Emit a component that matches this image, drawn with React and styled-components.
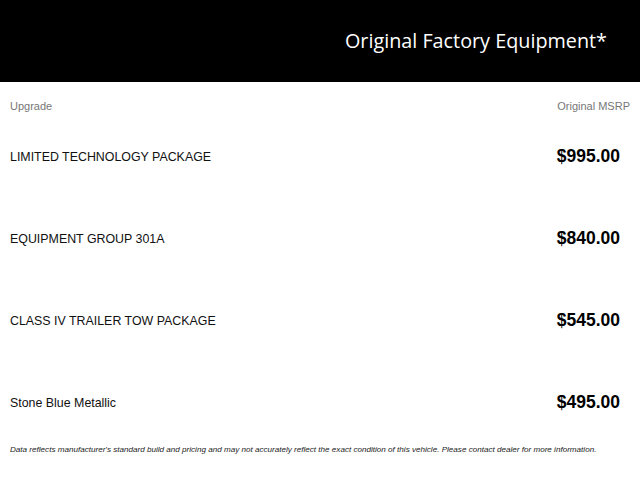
import React from 'react';
import styled, { createGlobalStyle } from 'styled-components';

const GlobalStyle = createGlobalStyle`
  body {
    margin: 0;
    background: #fff;
    font-family: "Liberation Sans", Arial, sans-serif;
  }
`;

const Header = styled.header`
  height: 82px;
  background: #000;
  display: flex;
  align-items: center;
  justify-content: flex-end;
  padding-right: 33px;
  box-sizing: border-box;
`;

const Title = styled.h1`
  margin: 0 0 2px;
  color: #fff;
  font-family: "Open Sans", sans-serif;
  font-weight: 400;
  font-size: 19.8px;
`;

const Labels = styled.div`
  display: flex;
  justify-content: space-between;
  padding: 17px 10px 3px;
  font-size: 11px;
  line-height: 14px;
  color: #777;
`;

const Row = styled.div`
  height: 82px;
  display: flex;
  align-items: center;
  justify-content: space-between;
  padding: 0 20px 0 10px;
`;

const Name = styled.span`
  font-size: 12.4px;
  color: #111;
  margin-top: -1px;
`;

const Price = styled.span`
  font-size: 17.5px;
  font-weight: 700;
  color: #000;
  margin-top: -1px;
`;

const Note = styled.p`
  margin: 0;
  padding: 0 10px;
  font-size: 8.1px;
  line-height: 12px;
  font-style: italic;
  color: #222;
`;

const items = [
  ['LIMITED TECHNOLOGY PACKAGE', '$995.00'],
  ['EQUIPMENT GROUP 301A', '$840.00'],
  ['CLASS IV TRAILER TOW PACKAGE', '$545.00'],
  ['Stone Blue Metallic', '$495.00'],
];

export default function App() {
  return (
    <>
      <GlobalStyle />
      <Header>
        <Title>Original Factory Equipment*</Title>
      </Header>
      <Labels>
        <span>Upgrade</span>
        <span>Original MSRP</span>
      </Labels>
      {items.map(([name, price]) => (
        <Row key={name}>
          <Name>{name}</Name>
          <Price>{price}</Price>
        </Row>
      ))}
      <Note>
        Data reflects manufacturer's standard build and pricing and may not accurately reflect the exact condition of this vehicle. Please contact dealer for more information.
      </Note>
    </>
  );
}
